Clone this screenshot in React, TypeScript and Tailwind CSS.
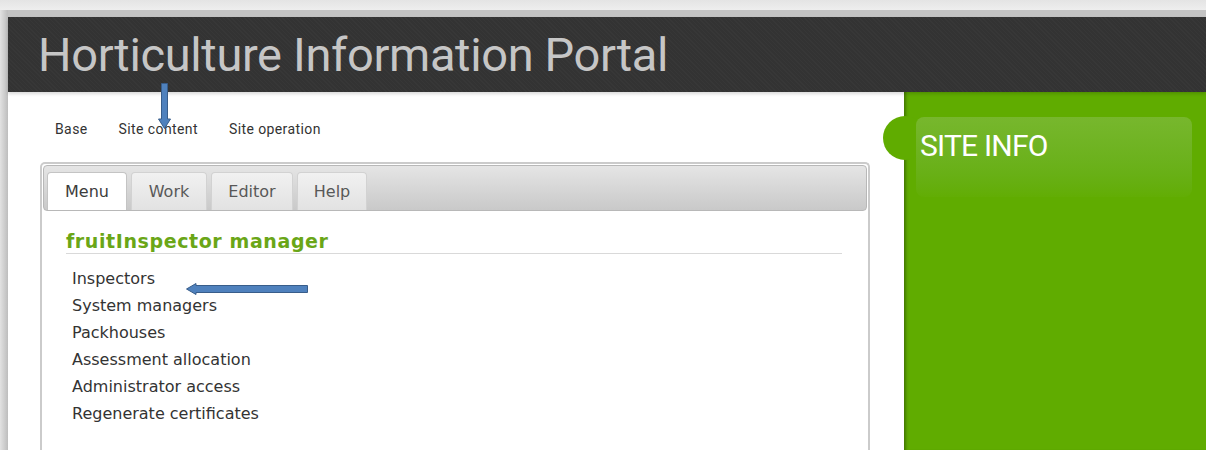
import React from 'react';

const topNav = ['Base', 'Site content', 'Site operation'];
const tabs = [
  { label: 'Menu', width: 'w-[80px]' },
  { label: 'Work', width: 'w-[76px]' },
  { label: 'Editor', width: 'w-[82px]' },
  { label: 'Help', width: 'w-[70px]' },
];
const menuLinks = [
  'Inspectors',
  'System managers',
  'Packhouses',
  'Assessment allocation',
  'Administrator access',
  'Regenerate certificates',
];

function DownArrow() {
  return (
    <svg width="13" height="46" viewBox="0 0 13 46" className="absolute left-[158px] top-[83px] z-20">
      <path
        d="M3.5 0.5 H9.5 V36 H12.5 L6.5 45.5 L0.5 36 H3.5 Z"
        fill="#4f81bd"
        stroke="#385d8a"
        strokeWidth="1"
      />
    </svg>
  );
}

function LeftArrow() {
  return (
    <svg width="122" height="12" viewBox="0 0 122 12" className="absolute left-[186px] top-[283px] z-20">
      <path
        d="M0.5 6 L10 0.5 V2.5 H121.5 V9.5 H10 V11.5 Z"
        fill="#4f81bd"
        stroke="#385d8a"
        strokeWidth="1"
      />
    </svg>
  );
}

export default function App() {
  return (
    <div className="relative flex h-[450px] w-[1206px] flex-col overflow-hidden bg-[#ececec]">
      <div className="h-[10px] shrink-0 bg-gradient-to-b from-[#e4e4e4] to-[#eeeeee]" />
      <div className="flex min-h-0 flex-1">
        <div className="w-[8px] shrink-0 bg-gradient-to-r from-[#e2e2e2] to-[#bdbdbd]" />
        <div className="flex min-w-0 flex-1 flex-col border-t-[7px] border-[#c3c3c3]">
          <header className="relative z-10 flex h-[75px] shrink-0 items-center bg-[#333333] bg-[repeating-linear-gradient(45deg,rgba(255,255,255,0.018)_0px,rgba(255,255,255,0.018)_1px,transparent_1px,transparent_3px)] pl-[30px] shadow-[0_2px_3px_rgba(0,0,0,0.15)]">
            <h1 className="font-['Roboto',sans-serif] text-[47px] leading-none tracking-[-0.35px] text-[#c6c6c6]">
              Horticulture Information Portal
            </h1>
          </header>

          <div className="flex min-h-0 flex-1">
            <main className="w-[896px] shrink-0 bg-white pl-[32px] pt-[27px]">
              <nav className="flex gap-[31px] pl-[15px] font-['Roboto',sans-serif] text-[14px] leading-5 tracking-[0.4px] text-[#333]">
                {topNav.map((item) => (
                  <span key={item}>{item}</span>
                ))}
              </nav>

              <section className="mt-[23px] h-[400px] w-[830px] rounded-t-[5px] border-2 border-b-0 border-[#cbcbcb] p-px font-['DejaVu_Sans',sans-serif]">
                <div className="flex h-[46px] items-end gap-[4px] rounded-[4px] border border-[#b8b8b8] bg-gradient-to-b from-[#e5e5e5] to-[#c9c9c9] pl-[3px]">
                  {tabs.map((tab, i) => (
                    <div
                      key={tab.label}
                      className={`${tab.width} ${
                        i === 0
                          ? 'flex h-[38px] items-center justify-center rounded-t-[4px] border border-b-0 border-[#c4c4c4] bg-white text-[16px] text-[#3c3c3c]'
                          : 'flex h-[38px] items-center justify-center rounded-t-[4px] border border-b-0 border-[#d2d2d2] bg-gradient-to-b from-[#f1f1f1] to-[#e2e2e2] text-[16px] text-[#585858]'
                      }`}
                    >
                      {tab.label}
                    </div>
                  ))}
                </div>

                <div className="pl-[23px] pr-[25px]">
                  <h2 className="mt-[19px] border-b border-[#d9d9d9] pb-px text-[19px] font-bold leading-[22px] tracking-[0.6px] text-[#6aa617]">
                    fruitInspector manager
                  </h2>
                  <ul className="mt-[11px] pl-[6px] text-[16px] leading-[27px] text-[#333]">
                    {menuLinks.map((link) => (
                      <li key={link}>{link}</li>
                    ))}
                  </ul>
                </div>
              </section>
            </main>

            <aside className="relative flex-1 bg-[#60ac00] shadow-[inset_4px_0_3px_-2px_rgba(0,0,0,0.3)]">
              <div className="absolute left-[-21px] top-[24px] size-[44px] rounded-full bg-[#60ac00]" />
              <div className="relative ml-[12px] mr-[14px] mt-[25px] h-[80px] rounded-[8px] bg-gradient-to-b from-[#77b72d] to-[#62ad04] pl-[4px] pt-[14px]">
                <h3 className="font-['Roboto',sans-serif] text-[30px] leading-none tracking-[-0.8px] text-white">
                  SITE INFO
                </h3>
              </div>
            </aside>
          </div>
        </div>
      </div>

      <DownArrow />
      <LeftArrow />
    </div>
  );
}
